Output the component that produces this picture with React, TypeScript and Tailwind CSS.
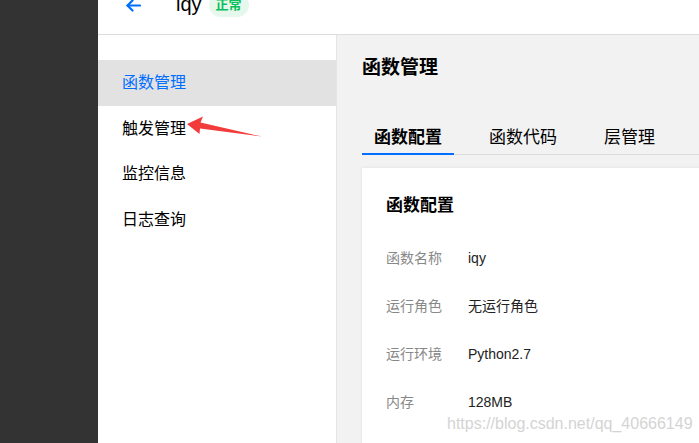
import React from "react";

const font = "font-['Liberation_Sans','Noto_Sans_CJK_SC',sans-serif]";

export default function App() {
  const rows: [string, string][] = [
    ["函数名称", "iqy"],
    ["运行角色", "无运行角色"],
    ["运行环境", "Python2.7"],
    ["内存", "128MB"],
  ];
  const menu = ["函数管理", "触发管理", "监控信息", "日志查询"];
  return (
    <div className={`relative w-[699px] h-[443px] overflow-hidden flex bg-white ${font}`}>
      <div className="w-[98px] shrink-0 bg-[#333333]" />
      <div className="flex-1 flex flex-col min-w-0">
        <div className="h-[35px] shrink-0 border-b border-[#dddddd] overflow-hidden bg-white">
          <div className="h-[28px] -mt-[10px] flex items-center pl-[28px]">
            <svg width="15" height="13" viewBox="0 0 15 13" className="mt-[3px]" fill="none" stroke="#006eff" strokeWidth="2.2" strokeLinecap="round" strokeLinejoin="round">
              <path d="M14 6.5H1.5" />
              <path d="M6.5 1.5L1.5 6.5L6.5 11.5" />
            </svg>
            <span className="ml-[35px] text-[20px] leading-[28px] text-black">iqy</span>
            <span className="ml-[7px] mt-[2px] h-[24px] px-[7px] rounded-full bg-[#e6f7eb] text-[#0abf5b] text-[13px] font-bold leading-[24px]">
              正常
            </span>
          </div>
        </div>
        <div className="flex-1 flex min-h-0">
          <div className="w-[239px] shrink-0 bg-white border-r border-[#e5e5e5] pt-[25px]">
            {menu.map((m, i) => (
              <div
                key={m}
                className={`h-[45.5px] flex items-center pl-[24px] pt-[1px] text-[16px] ${
                  i === 0 ? "bg-[#e2e2e2] text-[#006eff]" : "text-black"
                }`}
              >
                {m}
              </div>
            ))}
          </div>
          <div className="flex-1 min-w-0 bg-[#f2f2f2] pl-[25px] pt-[20px] overflow-hidden">
            <div className="text-[19px] leading-[26px] font-bold text-black">函数管理</div>
            <div className="mt-[45px] flex gap-[23px] border-b border-[#dcdcdc]">
              {["函数配置", "函数代码", "层管理"].map((t, i) => (
                <div
                  key={t}
                  className={`px-[12px] pb-[3px] text-[17px] leading-[24px] -mb-px border-b-2 ${
                    i === 0 ? "border-[#006eff] font-bold text-black" : "border-transparent text-black"
                  }`}
                >
                  {t}
                </div>
              ))}
            </div>
            <div className="mt-[13px] w-[420px] h-[300px] bg-white shadow-[0_0_3px_rgba(0,0,0,0.08)] pl-[24px] pt-[26px]">
              <div className="text-[17px] leading-[24px] font-bold text-black">函数配置</div>
              <div className="mt-[16px]">
                {rows.map(([k, v]) => (
                  <div key={k} className="h-[48px] flex items-center text-[14px]">
                    <span className="w-[82px] text-[#888888]">{k}</span>
                    <span className="text-[#222222]">{v}</span>
                  </div>
                ))}
              </div>
            </div>
          </div>
        </div>
      </div>
      <svg className="absolute left-0 top-0 pointer-events-none" width="699" height="443">
        <polygon points="187,124 203,116.5 200.5,122.5 262,136.5 200,128.5 199.5,134" fill="#f23c3c" />
      </svg>
      <div className="absolute left-[447px] top-[413px] text-[16px] leading-[22px] text-[#d4d4d4] font-['Liberation_Sans',sans-serif] pointer-events-none">
        https://blog.csdn.net/qq_40666149
      </div>
    </div>
  );
}
